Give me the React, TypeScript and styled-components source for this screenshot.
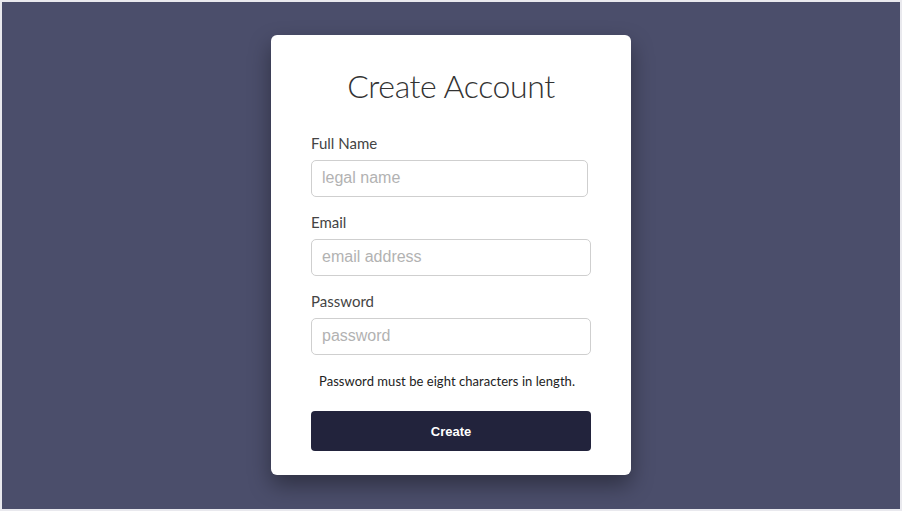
import styled, { createGlobalStyle } from "styled-components";

const GlobalStyle = createGlobalStyle`
  html, body {
    margin: 0;
    padding: 0;
  }
  * {
    box-sizing: border-box;
  }
`;

const Page = styled.div`
  height: 100vh;
  display: flex;
  align-items: center;
  justify-content: center;
  padding-bottom: 2px;
  background-color: #4b4e6b;
  border: 2px solid #e9e9ee;
  font-family: Lato, "Open Sans", sans-serif;
`;

const Card = styled.form`
  width: 360px;
  padding: 29px 40px 24px;
  background-color: #ffffff;
  border-radius: 6px;
  box-shadow: 0 10px 22px rgba(0, 0, 0, 0.38);
  display: flex;
  flex-direction: column;
`;

const Title = styled.h1`
  margin: 0 0 26px;
  font-family: Lato, sans-serif;
  font-weight: 300;
  font-size: 32px;
  line-height: 44px;
  letter-spacing: -0.4px;
  color: #333333;
  text-align: center;
`;

const Field = styled.div`
  display: flex;
  flex-direction: column;
  margin-bottom: 16px;

  &:last-of-type {
    margin-bottom: 0;
  }
`;

const Label = styled.label`
  font-size: 15px;
  line-height: 18px;
  color: #444444;
  margin-bottom: 8px;
`;

const Input = styled.input<{ $width?: number }>`
  width: ${(p) => (p.$width ? `${p.$width}px` : "100%")};
  height: 37px;
  padding: 0 10px;
  border: 1px solid #cfcfcf;
  border-radius: 5px;
  font-family: "Liberation Sans", Arial, sans-serif;
  font-size: 16px;
  color: #333333;
  outline: none;

  &::placeholder {
    color: #b2b2b2;
  }
`;

const Hint = styled.p`
  margin: 18px 0 0;
  padding-left: 8px;
  font-size: 13px;
  line-height: 16px;
  letter-spacing: 0.05px;
  color: #222222;
`;

const Button = styled.button`
  margin-top: 22px;
  height: 40px;
  width: 100%;
  padding: 2px 0 0;
  border: none;
  border-radius: 4px;
  background-color: #22233c;
  color: #ffffff;
  font-family: "Liberation Sans", Arial, sans-serif;
  font-size: 13px;
  font-weight: 700;
  cursor: pointer;
`;

export default function App() {
  return (
    <>
      <GlobalStyle />
      <Page>
        <Card onSubmit={(e) => e.preventDefault()}>
          <Title>Create Account</Title>
          <Field>
            <Label htmlFor="name">Full Name</Label>
            <Input id="name" type="text" placeholder="legal name" $width={277} />
          </Field>
          <Field>
            <Label htmlFor="email">Email</Label>
            <Input id="email" type="email" placeholder="email address" />
          </Field>
          <Field>
            <Label htmlFor="password">Password</Label>
            <Input id="password" type="password" placeholder="password" />
          </Field>
          <Hint>Password must be eight characters in length.</Hint>
          <Button type="submit">Create</Button>
        </Card>
      </Page>
    </>
  );
}
